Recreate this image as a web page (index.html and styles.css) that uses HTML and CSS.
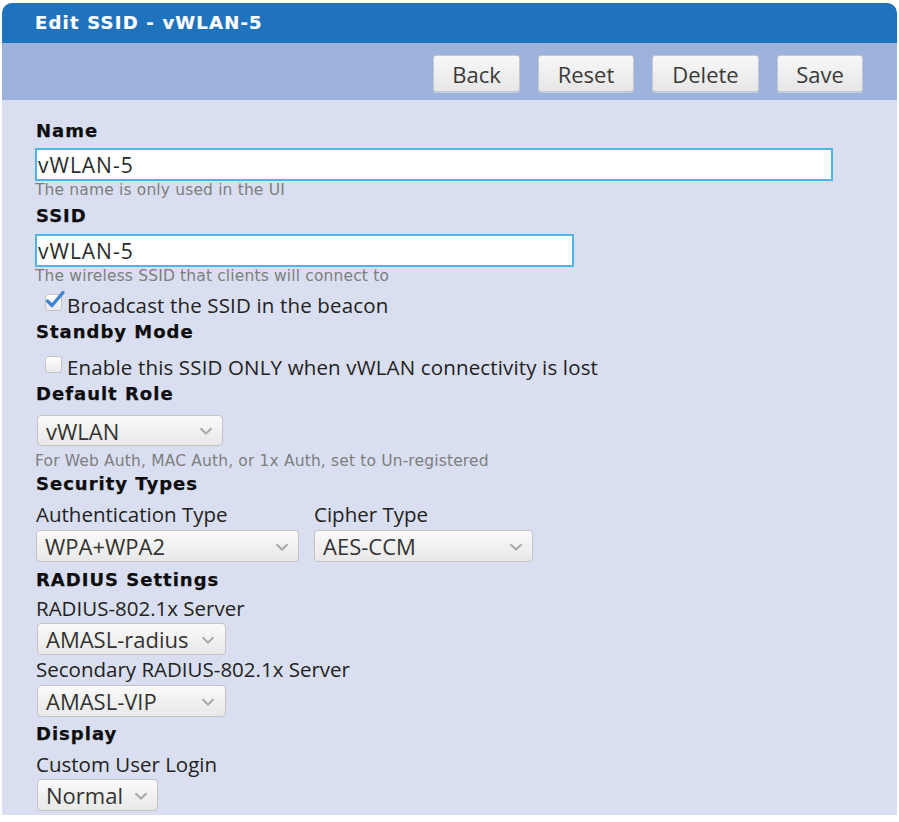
FILE: index.html
```html
<!DOCTYPE html>
<html>
<head>
<meta charset="utf-8">
<link rel="stylesheet" href="styles.css">
</head>
<body>
<div class="panel">
  <div class="head">Edit SSID - vWLAN-5</div>
  <div class="toolbar">
    <span class="btn btn-back">Back</span>
    <span class="btn btn-reset">Reset</span>
    <span class="btn btn-delete">Delete</span>
    <span class="btn btn-save">Save</span>
  </div>
  <div class="form">
    <div class="lbl lbl-name">Name</div>
    <div class="input input-name">vWLAN-5</div>
    <div class="hint">The name is only used in the UI</div>
    <div class="lbl lbl-ssid">SSID</div>
    <div class="input input-ssid">vWLAN-5</div>
    <div class="hint">The wireless SSID that clients will connect to</div>
    <div class="check-row check-row-1">
      <span class="box"><svg width="22" height="20" viewBox="0 0 22 20"><path d="M3.5 11 L8 15.5 L19 2.5" fill="none" stroke="#3f87d5" stroke-width="3.4" stroke-linecap="round" stroke-linejoin="round"/></svg></span>
      <span class="check-text">Broadcast the SSID in the beacon</span>
    </div>
    <div class="lbl lbl-standby">Standby Mode</div>
    <div class="check-row check-row-2">
      <span class="box"></span>
      <span class="check-text">Enable this SSID ONLY when vWLAN connectivity is lost</span>
    </div>
    <div class="lbl lbl-role">Default Role</div>
    <div class="sel sel-role"><span>vWLAN</span><svg class="chev" width="14" height="8" viewBox="0 0 14 8"><path d="M1.5 1.2 L7 6.5 L12.5 1.2" fill="none" stroke="#a9a9a9" stroke-width="2"/></svg></div>
    <div class="hint hint-role">For Web Auth, MAC Auth, or 1x Auth, set to Un-registered</div>
    <div class="lbl lbl-security">Security Types</div>
    <div class="pair">
      <div class="col">
        <div class="sub sub-pair">Authentication Type</div>
        <div class="sel sel-auth"><span>WPA+WPA2</span><svg class="chev" width="14" height="8" viewBox="0 0 14 8"><path d="M1.5 1.2 L7 6.5 L12.5 1.2" fill="none" stroke="#a9a9a9" stroke-width="2"/></svg></div>
      </div>
      <div class="col">
        <div class="sub sub-pair">Cipher Type</div>
        <div class="sel sel-cipher"><span>AES-CCM</span><svg class="chev" width="14" height="8" viewBox="0 0 14 8"><path d="M1.5 1.2 L7 6.5 L12.5 1.2" fill="none" stroke="#a9a9a9" stroke-width="2"/></svg></div>
      </div>
    </div>
    <div class="lbl lbl-radius">RADIUS Settings</div>
    <div class="sub sub-radius">RADIUS-802.1x Server</div>
    <div class="sel sel-radius sel-r1"><span>AMASL-radius</span><svg class="chev" width="14" height="8" viewBox="0 0 14 8"><path d="M1.5 1.2 L7 6.5 L12.5 1.2" fill="none" stroke="#a9a9a9" stroke-width="2"/></svg></div>
    <div class="sub sub-secondary">Secondary RADIUS-802.1x Server</div>
    <div class="sel sel-radius sel-r2"><span>AMASL-VIP</span><svg class="chev" width="14" height="8" viewBox="0 0 14 8"><path d="M1.5 1.2 L7 6.5 L12.5 1.2" fill="none" stroke="#a9a9a9" stroke-width="2"/></svg></div>
    <div class="lbl lbl-display">Display</div>
    <div class="sub sub-login">Custom User Login</div>
    <div class="sel sel-normal"><span>Normal</span><svg class="chev" width="14" height="8" viewBox="0 0 14 8"><path d="M1.5 1.2 L7 6.5 L12.5 1.2" fill="none" stroke="#a9a9a9" stroke-width="2"/></svg></div>
  </div>
</div>
</body>
</html>
```

FILE: styles.css
```css
html, body {
  margin: 0;
  padding: 0;
  background: #ffffff;
}

body {
  font-family: "DejaVu Sans", Verdana, sans-serif;
  color: #1a1a1a;
}

.panel {
  margin: 3px 0 0 2px;
  width: 895px;
  height: 812px;
  background: #d9dff0;
  border-radius: 10px 10px 0 0;
  overflow: hidden;
}

.head {
  height: 40px;
  background: #1f73bd;
  color: #ffffff;
  font-family: "DejaVu Sans", Verdana, sans-serif;
  font-weight: bold;
  font-size: 18px;
  letter-spacing: 1.2px;
  line-height: 40px;
  padding-left: 33px;
  box-sizing: border-box;
  -webkit-text-stroke: 0.2px #ffffff;
}

.toolbar {
  height: 57px;
  background: #9eb3dc;
  display: flex;
  justify-content: flex-end;
  align-items: flex-start;
  gap: 18px;
  padding: 12px 34px 0 0;
  box-sizing: border-box;
}

.btn {
  display: flex;
  align-items: center;
  justify-content: center;
  height: 37px;
  box-sizing: border-box;
  border: 1px solid #c5c8ce;
  border-radius: 3px;
  background: linear-gradient(#f8f8f8, #e6e6e6);
  box-shadow: 0 1px 0 rgba(255,255,255,0.35);
  font-family: "Open Sans", "DejaVu Sans", sans-serif;
  font-size: 22px;
  color: #3a3a3a;
}

.btn-back { width: 87px; }
.btn-reset { width: 96px; }
.btn-delete { width: 107px; }
.btn-save { width: 86px; }

.form {
  padding: 0 0 0 33px;
}

/* bold section labels */
.lbl {
  font-family: "DejaVu Sans", Verdana, sans-serif;
  font-weight: bold;
  font-size: 18px;
  letter-spacing: 1px;
  line-height: 22px;
  height: 22px;
  color: #0d0d0d;
  padding-left: 1px;
  -webkit-text-stroke: 0.25px #0d0d0d;
}

.lbl-name { margin-top: 20px; }
.lbl-ssid { margin-top: 6px; }
.lbl-standby { margin-top: 4px; }
.lbl-role { margin-top: 4px; }
.lbl-security { margin-top: 3px; }
.lbl-radius { margin-top: 7px; }
.lbl-display { margin-top: 6px; }

/* text inputs */
.input {
  height: 33px;
  box-sizing: border-box;
  border: 2px solid #4fb4e6;
  background: #ffffff;
  font-family: "Open Sans", "DejaVu Sans", sans-serif;
  font-size: 21px;
  letter-spacing: 1px;
  line-height: 28px;
  padding: 1px 0 0 1px;
  color: #2a2a2a;
  overflow: hidden;
}

.input-name { width: 798px; margin-top: 6px; }
.input-ssid { width: 539px; margin-top: 7px; }

/* gray hints */
.hint {
  font-family: "DejaVu Sans", Verdana, sans-serif;
  font-size: 15.5px;
  letter-spacing: 0.15px;
  line-height: 18px;
  height: 18px;
  color: #7e7e7e;
  white-space: nowrap;
}

.hint-role { margin-top: 6px; }

/* checkboxes */
.check-row {
  display: flex;
  align-items: flex-start;
  height: 24px;
  padding-left: 10px;
}

.check-row-1 { margin-top: 8px; }
.check-row-2 { margin-top: 12px; }

.box {
  position: relative;
  width: 17px;
  height: 17px;
  box-sizing: border-box;
  border: 1px solid #c4c4c4;
  border-radius: 3px;
  background: linear-gradient(#ffffff, #e8e8e8);
  margin: 1px 5px 0 0;
  flex: none;
}

.box svg {
  position: absolute;
  left: -2px;
  top: -5px;
}

.check-text,
.sub {
  font-family: "Open Sans", "DejaVu Sans", sans-serif;
  font-size: 20.5px;
  line-height: 24px;
  color: #222222;
  white-space: nowrap;
}

.check-text {
  letter-spacing: 0.15px;
}

.sub {
  height: 24px;
  padding-left: 1px;
}

.sub-pair { margin-top: 7px; }
.sub-radius { margin-top: 5px; }
.sub-secondary { margin-top: 2px; }
.sub-login { margin-top: 7px; }

/* select boxes */
.sel {
  display: flex;
  align-items: center;
  justify-content: space-between;
  height: 32px;
  box-sizing: border-box;
  border: 1px solid #c4c4c4;
  border-radius: 4px;
  background: linear-gradient(#fafafa, #e8e8e8);
  padding: 0 9px 0 8px;
  font-family: "Open Sans", "DejaVu Sans", sans-serif;
  font-size: 22px;
  line-height: 30px;
  color: #333333;
  margin-left: 2px;
  white-space: nowrap;
}

.chev { flex: none; margin-top: 1px; }

.sel-role { width: 186px; height: 31px; margin-top: 10px; }
.sel-auth { width: 263px; margin-top: 4px; margin-left: 1px; }
.sel-cipher { width: 219px; margin-top: 4px; margin-left: 0; }
.sel-radius { width: 189px; padding-right: 10px; }
.sel-r1 { margin-top: 3px; }
.sel-r2 { margin-top: 4px; }
.sel-normal { width: 121px; margin-top: 3px; padding-right: 9px; }

.pair {
  display: flex;
  gap: 15px;
}

.pair .col:first-child .sub { width: 263px; }
.pair .col:last-child .sub { padding-left: 0; }
```
